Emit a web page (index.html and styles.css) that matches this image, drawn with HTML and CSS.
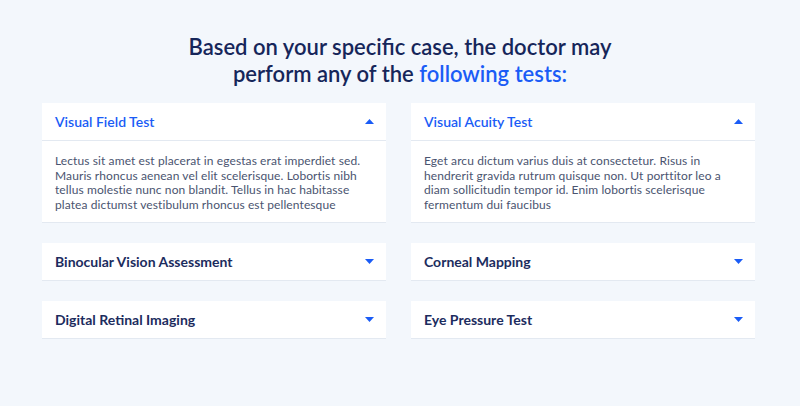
FILE: index.html
```html
<!DOCTYPE html>
<html lang="en">
<head>
<meta charset="utf-8">
<title>Tests</title>
<link rel="stylesheet" href="styles.css">
</head>
<body>
<main class="page">
  <h1 class="title">Based on your specific case, the doctor may<br>perform any of the <span class="accent">following tests:</span></h1>
  <div class="grid">
    <div class="card open">
      <div class="head"><span class="label">Visual Field Test</span><svg class="caret" width="9" height="5" viewBox="0 0 9 5"><path d="M0 5L4.5 0L9 5Z"/></svg></div>
      <div class="body">Lectus sit amet est placerat in egestas erat imperdiet sed.<br>Mauris rhoncus aenean vel elit scelerisque. Lobortis nibh<br>tellus molestie nunc non blandit. Tellus in hac habitasse<br>platea dictumst vestibulum rhoncus est pellentesque</div>
    </div>
    <div class="card open">
      <div class="head"><span class="label">Visual Acuity Test</span><svg class="caret" width="9" height="5" viewBox="0 0 9 5"><path d="M0 5L4.5 0L9 5Z"/></svg></div>
      <div class="body">Eget arcu dictum varius duis at consectetur. Risus in<br>hendrerit gravida rutrum quisque non. Ut porttitor leo a<br>diam sollicitudin tempor id. Enim lobortis scelerisque<br>fermentum dui faucibus</div>
    </div>
    <div class="card">
      <div class="head"><span class="label">Binocular Vision Assessment</span><svg class="caret" width="9" height="5" viewBox="0 0 9 5"><path d="M0 0L9 0L4.5 5Z"/></svg></div>
    </div>
    <div class="card">
      <div class="head"><span class="label">Corneal Mapping</span><svg class="caret" width="9" height="5" viewBox="0 0 9 5"><path d="M0 0L9 0L4.5 5Z"/></svg></div>
    </div>
    <div class="card">
      <div class="head"><span class="label">Digital Retinal Imaging</span><svg class="caret" width="9" height="5" viewBox="0 0 9 5"><path d="M0 0L9 0L4.5 5Z"/></svg></div>
    </div>
    <div class="card">
      <div class="head"><span class="label">Eye Pressure Test</span><svg class="caret" width="9" height="5" viewBox="0 0 9 5"><path d="M0 0L9 0L4.5 5Z"/></svg></div>
    </div>
  </div>
</main>
</body>
</html>
```
FILE: styles.css
```css
html, body {
  margin: 0;
  padding: 0;
  background: #f3f7fc;
  font-family: "Lato", "Noto Sans", sans-serif;
}
.page {
  width: 800px;
  height: 406px;
  box-sizing: border-box;
  padding-top: 33px;
}
.title {
  margin: 0 0 16px;
  text-align: center;
  font-size: 22px;
  line-height: 27px;
  font-weight: 600;
  color: #16265a;
}
.accent {
  color: #1a5cf6;
}
.grid {
  margin-left: 42px;
  width: 713px;
  display: grid;
  grid-template-columns: 344px 344px;
  column-gap: 25px;
  row-gap: 20px;
  align-items: start;
}
.card {
  background: #ffffff;
  border-bottom: 1px solid #e3e9f1;
}
.head {
  height: 37px;
  display: flex;
  align-items: center;
  justify-content: space-between;
  padding: 0 12px 0 13px;
  font-size: 14px;
  font-weight: 700;
  color: #1c2c5e;
}
.open .head {
  color: #1a5cf6;
  font-weight: 600;
  border-bottom: 1px solid #e3e9f1;
}
.caret {
  fill: #1a5cf6;
  display: block;
}
.body {
  padding: 13px 13px 9px;
  font-size: 12px;
  letter-spacing: 0.1px;
  line-height: 14.7px;
  color: #4a5470;
  white-space: nowrap;
}
```
